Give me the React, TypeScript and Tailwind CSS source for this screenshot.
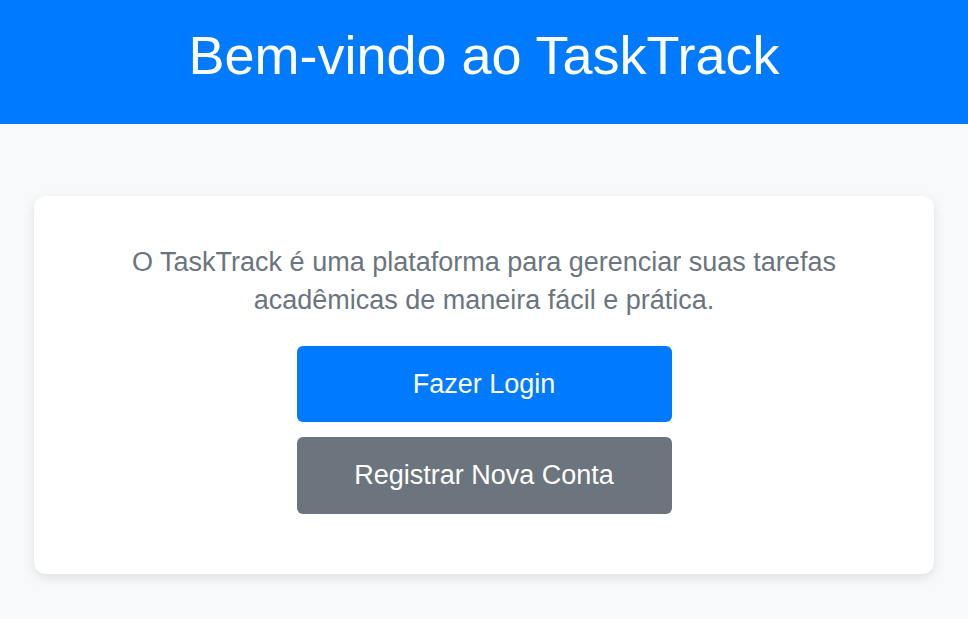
export default function App() {
  return (
    <div className="min-h-screen bg-[#f8f9fa] font-['Liberation_Sans',Arial,sans-serif]">
      <header className="h-[124px] bg-[#007bff] pt-[28px] text-center">
        <h1 className="text-[54px] leading-[54px] text-white">Bem-vindo ao TaskTrack</h1>
      </header>
      <main className="px-[34px] pt-[72px]">
        <div className="bg-white rounded-xl shadow-[0_4px_12px_rgba(0,0,0,0.1)] h-[378px] flex flex-col items-center pt-[47px]">
          <p className="text-[27px] leading-[38px] text-[#6c757d] text-center max-w-[760px]">
            O TaskTrack é uma plataforma para gerenciar suas tarefas acadêmicas de maneira fácil e prática.
          </p>
          <div className="mt-[27px] flex flex-col gap-[15px]">
            <button className="w-[375px] h-[76px] rounded-md bg-[#007bff] text-white text-[27px]">Fazer Login</button>
            <button className="w-[375px] h-[77px] rounded-md bg-[#6c757d] text-white text-[27px]">Registrar Nova Conta</button>
          </div>
        </div>
      </main>
    </div>
  )
}
